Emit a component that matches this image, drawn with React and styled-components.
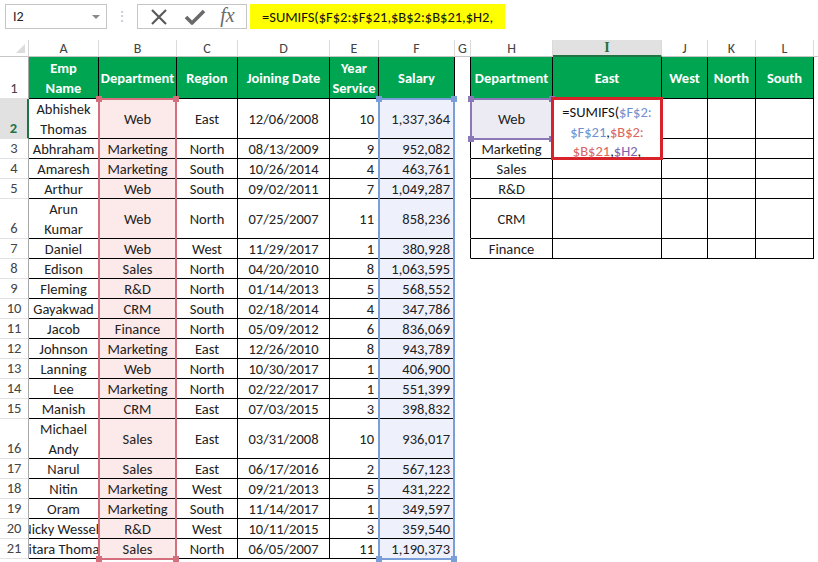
import React from 'react'
import styled, { createGlobalStyle, css } from 'styled-components'

const GlobalStyle = createGlobalStyle`
  body {
    margin: 0;
    background: #fff;
    overflow: hidden;
    font-family: Carlito, Lato, "Liberation Sans", sans-serif;
  }
`

const COLS = [29, 70, 78, 61, 92, 49, 76, 16, 82, 109, 46, 48, 58, 40]
const ROWS = [42, 40, 20, 20, 20, 40, 20, 20, 20, 20, 20, 20, 20, 20, 20, 40, 20, 20, 20, 20, 20]
const LETTERS = ['A', 'B', 'C', 'D', 'E', 'F', 'G', 'H', 'I', 'J', 'K', 'L', '']

const DATA = [
  ['Abhishek Thomas', 'Web', 'East', '12/06/2008', '10', '1,337,364'],
  ['Abhraham', 'Marketing', 'North', '08/13/2009', '9', '952,082'],
  ['Amaresh', 'Marketing', 'South', '10/26/2014', '4', '463,761'],
  ['Arthur', 'Web', 'South', '09/02/2011', '7', '1,049,287'],
  ['Arun Kumar', 'Web', 'North', '07/25/2007', '11', '858,236'],
  ['Daniel', 'Web', 'West', '11/29/2017', '1', '380,928'],
  ['Edison', 'Sales', 'North', '04/20/2010', '8', '1,063,595'],
  ['Fleming', 'R&D', 'North', '01/14/2013', '5', '568,552'],
  ['Gayakwad', 'CRM', 'South', '02/18/2014', '4', '347,786'],
  ['Jacob', 'Finance', 'North', '05/09/2012', '6', '836,069'],
  ['Johnson', 'Marketing', 'East', '12/26/2010', '8', '943,789'],
  ['Lanning', 'Web', 'North', '10/30/2017', '1', '406,900'],
  ['Lee', 'Marketing', 'North', '02/22/2017', '1', '551,399'],
  ['Manish', 'CRM', 'East', '07/03/2015', '3', '398,832'],
  ['Michael Andy', 'Sales', 'East', '03/31/2008', '10', '936,017'],
  ['Narul', 'Sales', 'East', '06/17/2016', '2', '567,123'],
  ['Nitin', 'Marketing', 'West', '09/21/2013', '5', '431,222'],
  ['Oram', 'Marketing', 'South', '11/14/2017', '1', '349,597'],
  ['Nicky Wessels', 'R&D', 'West', '10/11/2015', '3', '359,540'],
  ['Sitara Thomas', 'Sales', 'North', '06/05/2007', '11', '1,190,373'],
]

const DEPTS = ['Web', 'Marketing', 'Sales', 'R&D', 'CRM', 'Finance']

const Bar = styled.div`
  display: flex;
  align-items: flex-start;
  height: 40px;
  padding: 4px 0 0 5px;
  box-sizing: border-box;
`

const NameBox = styled.div`
  width: 102px;
  height: 25px;
  box-sizing: border-box;
  border: 1px solid #c6c6c6;
  display: flex;
  align-items: center;
  justify-content: space-between;
  padding: 0 6px 0 7px;
  font-size: 14px;
  color: #222;
`

const Caret = styled.span`
  width: 0;
  height: 0;
  border-left: 4px solid transparent;
  border-right: 4px solid transparent;
  border-top: 4px solid #8a8a8a;
`

const Grip = styled.div`
  width: 30px;
  text-align: center;
  color: #c2c2c2;
  font-size: 14px;
  line-height: 25px;
`

const FxBox = styled.div`
  width: 110px;
  height: 25px;
  box-sizing: border-box;
  border: 1px solid #c6c6c6;
  display: flex;
  align-items: center;
  justify-content: space-around;
  padding: 0 4px;
`

const Fx = styled.span`
  font-family: "Liberation Serif", serif;
  font-style: italic;
  font-size: 20px;
  color: #6a6a6a;
  margin-top: -2px;
`

const Formula = styled.div`
  margin-left: 3px;
  width: 255px;
  height: 25px;
  background: #ffff00;
  display: flex;
  align-items: center;
  padding-left: 12px;
  box-sizing: border-box;
  font-size: 14.5px;
  color: #111;
`

const Sheet = styled.div`
  display: grid;
  grid-template-columns: ${COLS.map(c => c + 'px').join(' ')};
  grid-template-rows: 17px ${ROWS.map(r => r + 'px').join(' ')} 20px;
  position: relative;
  font-size: 14.5px;
  color: #222;
`

const Corner = styled.div`
  position: relative;
  border-right: 1px solid #d4d4d4;
  border-bottom: 1px solid #c6c6c6;
  &::after {
    content: '';
    position: absolute;
    right: 3px;
    bottom: 3px;
    border-left: 9px solid transparent;
    border-bottom: 9px solid #dcdcdc;
  }
`

const ColHead = styled.div`
  display: flex;
  align-items: center;
  justify-content: center;
  font-size: 14px;
  color: #444;
  border-right: 1px solid #dadada;
  border-bottom: 1px solid #c6c6c6;
  ${p => p.$active && css`
    background: #e1e1e1;
    color: #217346;
    font-weight: bold;
    font-family: "Liberation Serif", serif;
    border-bottom: 2px solid #217346;
  `}
`

const RowHead = styled.div`
  display: flex;
  align-items: flex-end;
  justify-content: center;
  padding-bottom: 1px;
  box-sizing: border-box;
  color: #444;
  border-right: 1px solid #a8a8a8;
  border-bottom: 1px solid #e2e2e2;
  ${p => p.$active && css`
    background: #e1e1e1;
    color: #217346;
    font-weight: bold;
    border-right: 2px solid #217346;
  `}
`

const Cell = styled.div`
  display: flex;
  align-items: center;
  justify-content: ${p => p.$align || 'center'};
  text-align: center;
  padding: 0 4px;
  box-sizing: border-box;
  overflow: hidden;
  white-space: ${p => (p.$wrap ? 'normal' : 'nowrap')};
  line-height: 20px;
  background: ${p => p.$tint || 'transparent'};
  border-right: 1px solid ${p => (p.$ruled || p.$edge ? '#000' : 'transparent')};
  border-bottom: 1px solid ${p => (p.$ruled ? '#000' : 'transparent')};
`

const HeadCell = styled(Cell)`
  background: #00a551;
  color: #fff;
  font-weight: bold;
  white-space: normal;
  padding: 0 2px;
`

const Range = styled.div`
  position: absolute;
  grid-column: ${p => p.$col};
  grid-row: ${p => p.$rows};
  top: -1px;
  left: -1px;
  right: 0;
  bottom: -1px;
  border: 2px solid ${p => p.$color};
  pointer-events: none;
`

const Handle = styled.span`
  position: absolute;
  width: 6px;
  height: 6px;
  background: ${p => p.$color};
  ${p => (p.$v === 'top' ? 'top: -4px;' : 'bottom: -4px;')}
  ${p => (p.$h === 'left' ? 'left: -4px;' : 'right: -4px;')}
`

const Editor = styled.div`
  position: absolute;
  grid-column: 10 / 11;
  grid-row: 3 / 5;
  top: -2px;
  left: -2px;
  right: -1px;
  bottom: -1px;
  border: 3px solid #d9232b;
  background: #fff;
  padding-top: 3px;
  box-sizing: border-box;
  text-align: center;
  line-height: 19.5px;
  font-size: 14.5px;
  color: #111;
`

const Ref = styled.span`
  color: ${p => p.$color};
`

const BLUE = '#6f90cf'
const RED = '#d96660'
const PURPLE = '#7f63aa'

function RangeBox({ col, rows, color }) {
  return (
    <Range $col={col} $rows={rows} $color={color}>
      <Handle $color={color} $v="top" $h="left" />
      <Handle $color={color} $v="top" $h="right" />
      <Handle $color={color} $v="bottom" $h="left" />
      <Handle $color={color} $v="bottom" $h="right" />
    </Range>
  )
}

function CrossIcon() {
  return (
    <svg width="20" height="20" viewBox="0 0 20 20">
      <path d="M3 3 L17 17 M17 3 L3 17" stroke="#5a5a5a" strokeWidth="2.2" fill="none" />
    </svg>
  )
}

function CheckIcon() {
  return (
    <svg width="22" height="20" viewBox="0 0 22 20">
      <path d="M2 10 L8 16 L20 4" stroke="#6a6a6a" strokeWidth="3.6" fill="none" strokeLinejoin="round" />
    </svg>
  )
}

export default function App() {
  const headers = ['Emp Name', 'Department', 'Region', 'Joining Date', 'Year Service', 'Salary']
  const rightHead = ['Department', 'East', 'West', 'North', 'South']

  const rows = []
  rows.push(
    <React.Fragment key="r1">
      <RowHead>1</RowHead>
      {headers.map(h => (
        <HeadCell key={h} $ruled>{h}</HeadCell>
      ))}
      <Cell $edge />
      {rightHead.map(h => (
        <HeadCell key={'r' + h} $ruled>{h}</HeadCell>
      ))}
      <Cell />
    </React.Fragment>
  )

  DATA.forEach((d, i) => {
    const n = i + 2
    const tall = ROWS[n - 1] > 20
    const inRight = n <= 7
    rows.push(
      <React.Fragment key={'r' + n}>
        <RowHead $active={n === 2}>{n}</RowHead>
        <Cell $ruled $wrap={tall}>{d[0]}</Cell>
        <Cell $ruled $tint="#fce9ea">{d[1]}</Cell>
        <Cell $ruled>{d[2]}</Cell>
        <Cell $ruled>{d[3]}</Cell>
        <Cell $ruled $align="flex-end">{d[4]}</Cell>
        <Cell $ruled $align="flex-end" $tint="#eef0fb">{d[5]}</Cell>
        <Cell $edge={inRight} />
        <Cell $ruled={inRight} $tint={n === 2 ? '#ecebf4' : undefined}>{inRight ? DEPTS[n - 2] : ''}</Cell>
        <Cell $ruled={inRight} />
        <Cell $ruled={inRight} />
        <Cell $ruled={inRight} />
        <Cell $ruled={inRight} />
        <Cell />
      </React.Fragment>
    )
  })

  return (
    <>
      <GlobalStyle />
      <Bar>
        <NameBox>
          <span>I2</span>
          <Caret />
        </NameBox>
        <Grip>⋮</Grip>
        <FxBox>
          <CrossIcon />
          <CheckIcon />
          <Fx>fx</Fx>
        </FxBox>
        <Formula>=SUMIFS($F$2:$F$21,$B$2:$B$21,$H2,</Formula>
      </Bar>
      <Sheet>
        <Corner />
        {LETTERS.map((l, i) => (
          <ColHead key={'c' + i} $active={l === 'I'}>{l}</ColHead>
        ))}
        {rows}
        <RangeBox col="3 / 4" rows="3 / 23" color="#d4707e" />
        <RangeBox col="7 / 8" rows="3 / 23" color="#7a9ed8" />
        <RangeBox col="9 / 10" rows="3 / 4" color="#8b78b8" />
        <Editor>
          <div>=SUMIFS(<Ref $color={BLUE}>$F$2:</Ref></div>
          <div><Ref $color={BLUE}>$F$21</Ref>,<Ref $color={RED}>$B$2:</Ref></div>
          <div><Ref $color={RED}>$B$21</Ref>,<Ref $color={PURPLE}>$H2</Ref>,</div>
        </Editor>
      </Sheet>
    </>
  )
}
